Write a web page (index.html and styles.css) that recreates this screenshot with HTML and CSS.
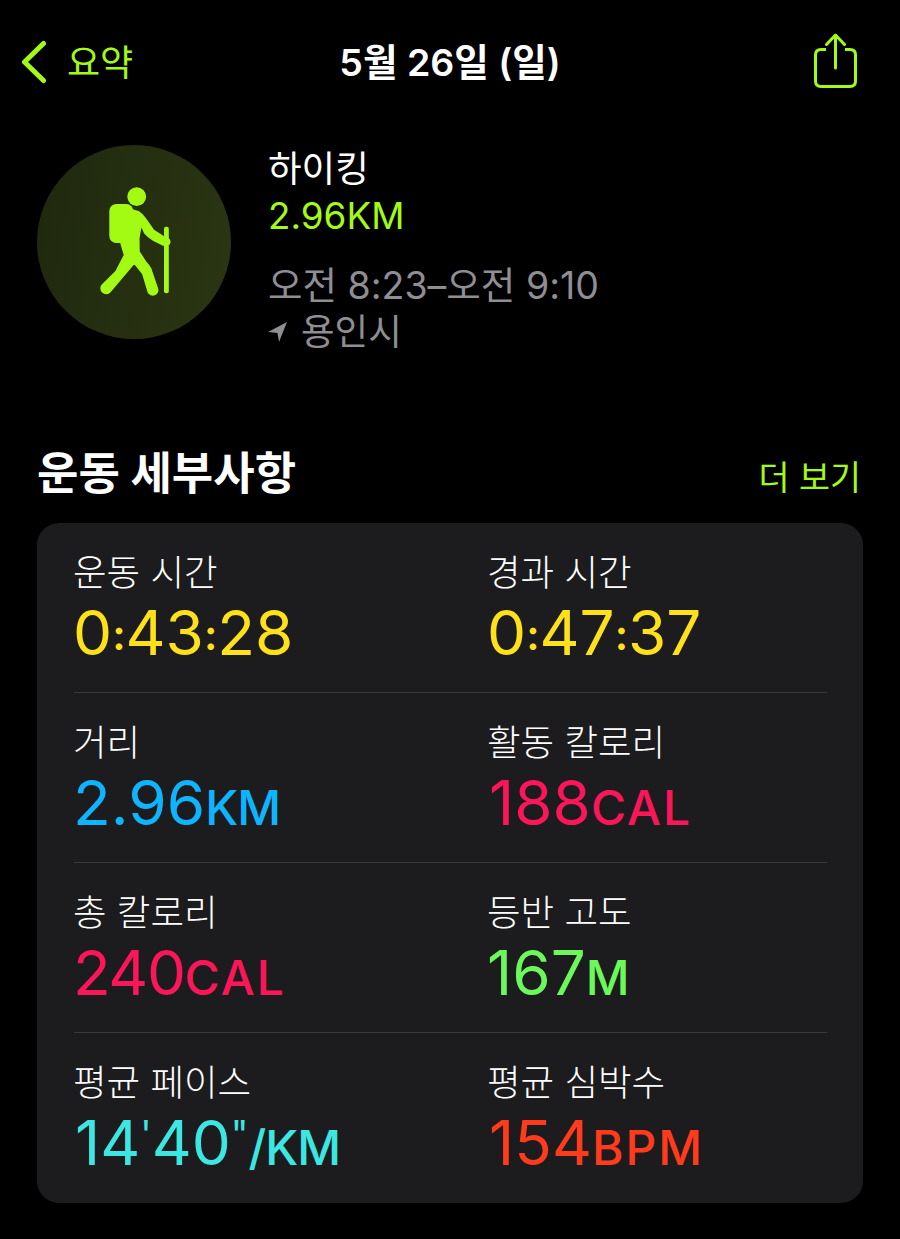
FILE: index.html
```html
<!DOCTYPE html>
<html lang="ko">
<head>
<meta charset="utf-8">
<title>운동 세부사항</title>
<link rel="stylesheet" href="styles.css">
</head>
<body>
<header class="nav">
  <a class="back">
    <svg class="chevron" viewBox="0 0 28 44" width="28" height="44"><path d="M24.500 3.500 L5.500 22 L24.500 40.500" fill="none" stroke="#a3fb14" stroke-width="5" stroke-linecap="round" stroke-linejoin="round"/></svg>
    <span class="back-label">요약</span>
  </a>
  <h1 class="nav-title">5월 26일 (일)</h1>
  <svg class="share" viewBox="0 0 46 56" width="46" height="56"><path d="M13 16.500 H8 Q2.500 16.500 2.500 22 V48 Q2.500 53.500 8 53.500 H37 Q42.500 53.500 42.500 48 V22 Q42.500 16.500 37 16.500 H32" fill="none" stroke="#a3fb14" stroke-width="3"/><path d="M22.500 35 V2.500 M13.500 11.500 L22.500 2 L31.500 11.500" fill="none" stroke="#a3fb14" stroke-width="3" stroke-linecap="round" stroke-linejoin="round"/></svg>
</header>

<section class="summary">
  <div class="badge">
    <svg viewBox="0 0 194 194" width="194" height="194">
      <circle cx="99.700" cy="51.700" r="9.400" fill="#a3fb14"/>
      <rect x="72.300" y="59" width="24" height="39" rx="7" fill="#a3fb14"/>
      <path d="M89.700 63.300 L101.300 66.700 Q105 69 108 73.300 L116.300 85 L126.300 91.700 L131 93.500 Q134 96 132 99 L126.300 100 L116.300 95 Q111 92 108 88.300 L104 80 L101.800 93.300 L102 106.700 L108.500 116.700 Q111.500 120 113.500 123.300 L120.300 143.300 A4.800 4.800 0 0 1 111.300 147 L105.800 128.800 L97.300 118 L91 125.500 L73 146.700 A5 5 0 0 1 65.300 140 L79.200 126.200 L87.500 110 L84 98.300 Z" fill="#a3fb14" stroke="#a3fb14" stroke-width="1.500" stroke-linejoin="round"/>
      <rect x="127" y="81.700" width="4.800" height="66.600" rx="2" fill="#a3fb14"/>
    </svg>
  </div>
  <div class="meta">
    <div class="meta-name">하이킹</div>
    <div class="meta-dist">2.96KM</div>
    <div class="meta-time">오전 8:23–오전 9:10</div>
    <div class="meta-place">
      <svg viewBox="0 0 20 20" width="20" height="20"><path d="M19 0 L0 10 L9.500 11 L11 20 Z" fill="#8e8e93"/></svg>
      <span>용인시</span>
    </div>
  </div>
</section>

<div class="section-head">
  <h2 class="section-title">운동 세부사항</h2>
  <span class="more">더 보기</span>
</div>

<main class="card">
  <div class="row">
    <div class="stat"><div class="label">운동 시간</div><div class="value yellow">0<span class="colon">:</span>43<span class="colon">:</span>28</div></div>
    <div class="stat"><div class="label">경과 시간</div><div class="value yellow">0<span class="colon">:</span>47<span class="colon">:</span>37</div></div>
  </div>
  <div class="row">
    <div class="stat"><div class="label">거리</div><div class="value blue">2.96<span class="unit unit-km">KM</span></div></div>
    <div class="stat"><div class="label">활동 칼로리</div><div class="value value-one pink">188<span class="unit">CAL</span></div></div>
  </div>
  <div class="row">
    <div class="stat"><div class="label">총 칼로리</div><div class="value pink"><span class="narrow">240</span><span class="unit">CAL</span></div></div>
    <div class="stat"><div class="label">등반 고도</div><div class="value green">167<span class="unit unit-km">M</span></div></div>
  </div>
  <div class="row">
    <div class="stat"><div class="label">평균 페이스</div><div class="value value-one cyan">14<span class="prime">'</span>40<span class="prime">"</span><span class="unit unit-km">/KM</span></div></div>
    <div class="stat"><div class="label">평균 심박수</div><div class="value value-one red">154<span class="unit">BPM</span></div></div>
  </div>
</main>
</body>
</html>
```
FILE: styles.css
```css
* { box-sizing: border-box; margin: 0; padding: 0; }
html, body { background: #000; }
body {
  width: 900px;
  height: 1239px;
  overflow: hidden;
  color: #fff;
  font-family: Inter, "Noto Sans CJK KR", sans-serif;
  -webkit-font-smoothing: antialiased;
}
.nav {
  position: relative;
  display: flex;
  align-items: center;
  justify-content: space-between;
  height: 124px;
  padding: 0 41px 0 19px;
}
.back { display: flex; align-items: center; gap: 20px; }
.chevron { display: block; }
.back-label { font-size: 36px; line-height: 44px; color: #a3fb14; position: relative; top: 1px; }
.nav-title {
  position: absolute;
  left: 0;
  right: 0;
  top: 41px;
  text-align: center;
  font-size: 37.500px;
  line-height: 44px;
  font-weight: 600;
}
.share { display: block; margin-top: -2px; }
.summary {
  display: flex;
  gap: 37px;
  padding: 21px 0 0 37px;
  height: 282px;
}
.badge {
  width: 194px;
  height: 194px;
  border-radius: 50%;
  background: linear-gradient(100deg, #1f280e, #2b3613);
}
.badge svg { display: block; }
.meta { padding-top: 1px; }
.meta-name { font-size: 36.500px; line-height: 46px; }
.meta-dist { font-size: 36.800px; line-height: 48px; color: #a3fb14; }
.meta-time { font-size: 37.500px; line-height: 46px; color: #8e8e93; margin-top: 23px; }
.meta-place { display: flex; align-items: center; gap: 13px; font-size: 36.500px; line-height: 46px; color: #8e8e93; }
.section-head {
  display: flex;
  justify-content: space-between;
  align-items: center;
  height: 126px;
  margin-top: -9px;
  padding: 28px 39px 0 37px;
}
.section-title { font-size: 45px; line-height: 52px; font-weight: 700; }
.more { font-size: 33.700px; color: #a3fb14; margin-top: 2px; }
.card {
  width: 826px;
  margin-left: 37px;
  height: 680px;
  background: #1c1c1e;
  border-radius: 22px;
  padding: 0 36px 0 37px;
}
.row {
  display: grid;
  grid-template-columns: 414px 1fr;
  height: 170px;
  padding-top: 27px;
  border-bottom: 1px solid #3a3a3c;
}
.row:last-child { border-bottom: 0; }
.stat { margin-left: -1px; }
.label { font-size: 36.500px; line-height: 47px; font-weight: 300; }
.value { font-size: 62px; line-height: 72px; font-weight: 400; }
.value-one { padding-left: 2px; }
.colon { font-size: 42px; font-weight: 600; line-height: 0; vertical-align: 5px; }
.prime { font-size: 38px; line-height: 0; vertical-align: 17px; }
.narrow { letter-spacing: -1.500px; }
.unit { font-size: 48px; font-weight: 500; letter-spacing: 2px; }
.unit-km { letter-spacing: -1px; }
.yellow { color: #ffe11a; }
.blue { color: #0fb4ff; }
.pink { color: #fb1659; }
.green { color: #6cf75a; }
.cyan { color: #3ce6e2; }
.red { color: #ff3b1c; }
```
